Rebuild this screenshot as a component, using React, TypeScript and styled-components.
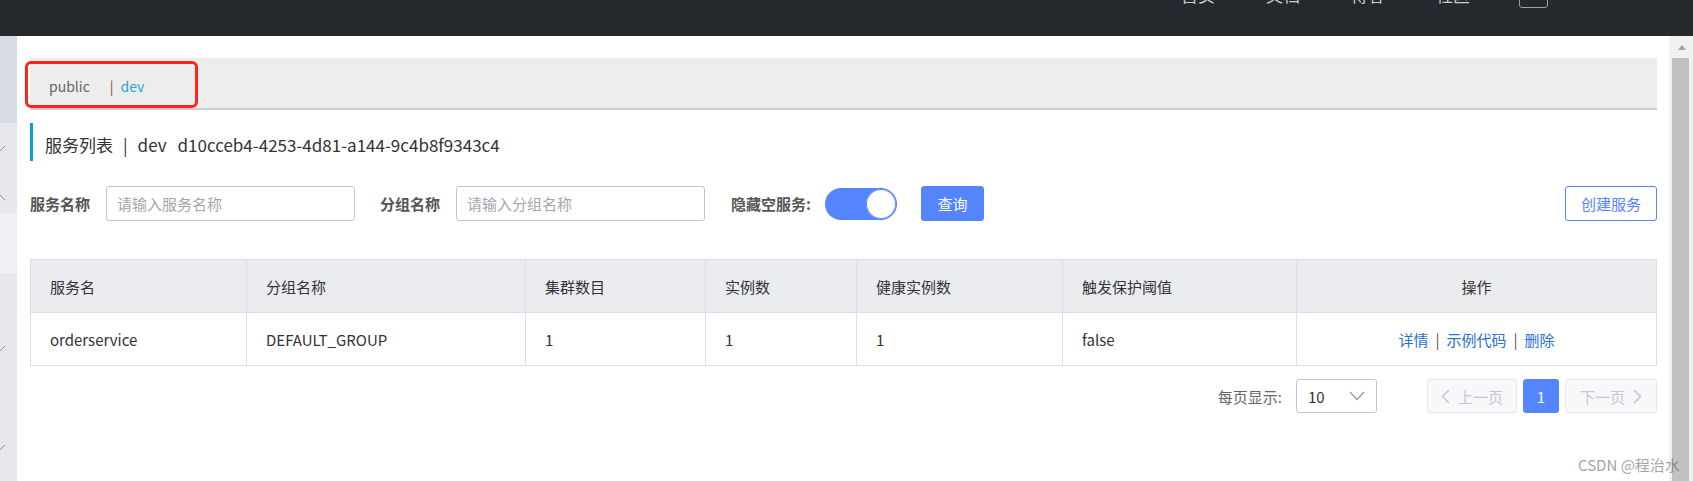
import React from 'react';
import styled, { createGlobalStyle } from 'styled-components';

const GlobalStyle = createGlobalStyle`
  html, body {
    margin: 0;
    padding: 0;
    background: #fff;
    overflow: hidden;
  }
  body {
    font-family: "Noto Sans CJK SC", "Noto Sans", sans-serif;
    color: #333;
  }
  * {
    box-sizing: border-box;
  }
`;

const Page = styled.div`
  position: relative;
  width: 1693px;
  height: 481px;
  display: flex;
  flex-direction: column;
  overflow: hidden;
`;

const TopBar = styled.header`
  flex: none;
  height: 36px;
  background: #25292e;
  display: flex;
  justify-content: flex-end;
  align-items: flex-start;
  padding-right: 145px;
  overflow: hidden;
`;

const NavList = styled.nav`
  display: flex;
  align-items: flex-start;
  margin-top: -15px;
`;

const NavItem = styled.span`
  color: #c9cbcd;
  font-size: 17px;
  line-height: 20px;
  margin-right: 51px;
`;

const LangBox = styled.span`
  width: 29px;
  height: 23px;
  margin-left: -2px;
  border: 1px solid #9b9ea2;
  border-radius: 3px;
`;

const Body = styled.div`
  flex: 1;
  min-height: 0;
  display: flex;
`;

const Sidebar = styled.aside`
  flex: none;
  width: 17px;
  display: flex;
  flex-direction: column;
  overflow: hidden;
`;

const SideItem = styled.div<{ $h?: number; $bg: string; $pad?: number }>`
  flex: ${({ $h }) => ($h ? 'none' : '1')};
  height: ${({ $h }) => ($h ? `${$h}px` : 'auto')};
  background: ${({ $bg }) => $bg};
  padding-top: ${({ $pad }) => $pad || 0}px;
`;

const Main = styled.main`
  flex: 1;
  min-width: 0;
  background: #fff;
  padding: 22px 12px 0 13px;
`;

const Scrollbar = styled.div`
  flex: none;
  width: 24px;
  background: #f1f1f1;
  display: flex;
  flex-direction: column;
`;

const ScrollArrow = styled.div`
  height: 22px;
  display: flex;
  align-items: center;
  justify-content: center;
  padding-left: 1px;
`;

const ScrollThumb = styled.div`
  flex: 1;
  margin: 0 4px 0 3px;
  background: #c1c1c1;
`;

const TabBar = styled.div`
  position: relative;
  height: 52px;
  background: #ededed;
  border-bottom: 2px solid #cdcdcd;
  display: flex;
  align-items: center;
  padding: 5px 0 0 19px;
  font-size: 14px;
`;

const TabItem = styled.span<{ $active?: boolean }>`
  color: ${({ $active }) => ($active ? '#27a6d9' : '#666')};
`;

const TabSep = styled.span`
  color: #8a4a4a;
  margin: 0 7px 0 20px;
`;

const Highlight = styled.div`
  position: absolute;
  left: -5px;
  top: 3px;
  width: 173px;
  height: 47px;
  border: 3px solid #ff2318;
  border-radius: 6px;
  pointer-events: none;
`;

const TitleBar = styled.h2`
  margin: 13px 0 0;
  height: 38px;
  border-left: 3px solid #0b9ed8;
  padding: 5px 0 0 12px;
  display: flex;
  align-items: center;
  font-size: 17px;
  font-weight: normal;
  color: #333;
`;

const TitleSep = styled.span`
  margin: 0 10px;
`;

const NamespaceId = styled.span`
  margin-left: 11px;
`;

const FilterRow = styled.div`
  margin-top: 25px;
  height: 35px;
  display: flex;
  align-items: center;
`;

const FilterLabel = styled.label<{ $gap?: number }>`
  font-size: 15px;
  font-weight: bold;
  color: #555;
  margin-left: ${({ $gap }) => $gap || 0}px;
  margin-right: 16px;
  white-space: nowrap;
`;

const TextInput = styled.input`
  width: 249px;
  height: 35px;
  border: 1px solid #c4c6cf;
  border-radius: 3px;
  padding: 0 10px;
  font-family: inherit;
  font-size: 15px;
  color: #333;
  outline: none;

  &::placeholder {
    color: #a3a6ad;
  }
`;

const Switch = styled.span<{ $on: boolean }>`
  display: flex;
  justify-content: ${({ $on }) => ($on ? 'flex-end' : 'flex-start')};
  align-items: center;
  width: 72px;
  height: 32px;
  margin-left: -2px;
  border-radius: 16px;
  background: ${({ $on }) => ($on ? '#5584ff' : '#e4e6ea')};
  padding: 1px;
`;

const Knob = styled.span`
  width: 30px;
  height: 30px;
  border-radius: 50%;
  background: #fff;
  box-shadow: 0 0 0 1px #5584ff inset;
`;

const Button = styled.button<{ $variant: 'primary' | 'outline' }>`
  height: 35px;
  padding: 0 14px;
  border-radius: 3px;
  font-family: inherit;
  font-size: 15px;
  cursor: pointer;
  border: 1px solid #5584ff;
  background: ${({ $variant }) => ($variant === 'primary' ? '#5584ff' : '#fff')};
  color: ${({ $variant }) => ($variant === 'primary' ? '#fff' : '#5584ff')};
`;

const SearchButton = styled(Button)`
  width: 63px;
  margin-left: 24px;
`;

const CreateButton = styled(Button)`
  width: 92px;
  margin-left: auto;
`;

const Table = styled.table`
  margin-top: 38px;
  width: 100%;
  border-collapse: collapse;
  table-layout: fixed;
  font-size: 15px;
  color: #333;
`;

const Th = styled.th<{ $center?: boolean }>`
  height: 53px;
  padding: 0 19px;
  background: #ebecf0;
  border: 1px solid #dcdee3;
  font-weight: normal;
  text-align: ${({ $center }) => ($center ? 'center' : 'left')};
`;

const Td = styled.td<{ $center?: boolean }>`
  height: 53px;
  padding: 0 19px;
  border: 1px solid #dcdee3;
  text-align: ${({ $center }) => ($center ? 'center' : 'left')};
`;

const ActionLink = styled.a`
  color: #2b6fd6;
  text-decoration: none;
  cursor: pointer;
`;

const ActionSep = styled.span`
  color: #555;
  margin: 0 7px;
`;

const Pager = styled.div`
  margin-top: 13px;
  height: 34px;
  display: flex;
  justify-content: flex-end;
  align-items: center;
  font-size: 15px;
`;

const PageSizeLabel = styled.span`
  color: #666;
  margin-right: 14px;
`;

const Select = styled.div`
  width: 81px;
  height: 34px;
  border: 1px solid #c4c6cf;
  border-radius: 3px;
  padding: 0 11px;
  display: flex;
  align-items: center;
  justify-content: space-between;
  color: #333;
  margin-right: 44px;
`;

const PageButton = styled.button<{ $w: number; $current?: boolean }>`
  width: ${({ $w }) => $w}px;
  height: 34px;
  margin-left: 6px;
  border-radius: 3px;
  font-family: inherit;
  font-size: 15px;
  display: flex;
  align-items: center;
  justify-content: center;
  gap: 8px;
  padding: 0;
  border: 1px solid ${({ $current }) => ($current ? '#5584ff' : '#e6e7eb')};
  background: ${({ $current }) => ($current ? '#5584ff' : '#f7f8fa')};
  color: ${({ $current }) => ($current ? '#fff' : '#c4c6cf')};
`;

const Watermark = styled.span`
  position: absolute;
  left: 1578px;
  top: 454px;
  font-size: 15px;
  color: rgba(100, 100, 100, 0.6);
  white-space: nowrap;
  pointer-events: none;
`;

const SideMark = ({ up }: { up?: boolean }) => (
  <svg width="6" height="6" viewBox="0 0 6 6" style={{ display: 'block' }}>
    <line
      x1="0"
      y1={up ? 0 : 6}
      x2="5"
      y2={up ? 5 : 1}
      stroke="#8c919a"
      strokeWidth="1"
    />
  </svg>
);

const Chevron = ({ dir }: { dir: 'left' | 'right' | 'down' }) => {
  if (dir === 'down') {
    return (
      <svg width="16" height="10" viewBox="0 0 16 10">
        <polyline points="1,1 8,8.5 15,1" fill="none" stroke="#999" strokeWidth="1.3" />
      </svg>
    );
  }
  return (
    <svg width="9" height="15" viewBox="0 0 9 15">
      <polyline
        points={dir === 'left' ? '8,1 1.5,7.5 8,14' : '1,1 7.5,7.5 1,14'}
        fill="none"
        stroke="#c4c6cf"
        strokeWidth="1.5"
      />
    </svg>
  );
};

const columns = [
  { title: '服务名', width: 216 },
  { title: '分组名称', width: 279 },
  { title: '集群数目', width: 180 },
  { title: '实例数', width: 151 },
  { title: '健康实例数', width: 206 },
  { title: '触发保护阈值', width: 234 },
  { title: '操作', center: true },
];

const rows = [
  {
    name: 'orderservice',
    group: 'DEFAULT_GROUP',
    clusters: 1,
    instances: 1,
    healthy: 1,
    threshold: 'false',
  },
];

export default function App() {
  return (
    <>
      <GlobalStyle />
      <Page>
        <TopBar>
          <NavList>
            <NavItem>首页</NavItem>
            <NavItem>文档</NavItem>
            <NavItem>博客</NavItem>
            <NavItem>社区</NavItem>
            <LangBox />
          </NavList>
        </TopBar>
        <Body>
          <Sidebar>
            <SideItem $h={87} $bg="#d8dce3" />
            <SideItem $h={50} $bg="#e6e8ee" $pad={22}>
              <SideMark />
            </SideItem>
            <SideItem $h={40} $bg="#e6e8ee" $pad={22}>
              <SideMark up />
            </SideItem>
            <SideItem $h={60} $bg="#eff0f4" />
            <SideItem $h={100} $bg="#e6e8ee" $pad={72}>
              <SideMark />
            </SideItem>
            <SideItem $h={99} $bg="#e6e8ee" $pad={71}>
              <SideMark />
            </SideItem>
            <SideItem $bg="#e6e8ee" />
          </Sidebar>

          <Main>
            <TabBar>
              <TabItem>public</TabItem>
              <TabSep>|</TabSep>
              <TabItem $active>dev</TabItem>
              <Highlight />
            </TabBar>

            <TitleBar>
              <span>服务列表</span>
              <TitleSep>|</TitleSep>
              <span>dev</span>
              <NamespaceId>d10cceb4-4253-4d81-a144-9c4b8f9343c4</NamespaceId>
            </TitleBar>

            <FilterRow>
              <FilterLabel>服务名称</FilterLabel>
              <TextInput placeholder="请输入服务名称" />
              <FilterLabel $gap={25}>分组名称</FilterLabel>
              <TextInput placeholder="请输入分组名称" />
              <FilterLabel $gap={26}>隐藏空服务:</FilterLabel>
              <Switch $on>
                <Knob />
              </Switch>
              <SearchButton $variant="primary">查询</SearchButton>
              <CreateButton $variant="outline">创建服务</CreateButton>
            </FilterRow>

            <Table>
              <colgroup>
                {columns.map((c) => (
                  <col key={c.title} style={c.width ? { width: c.width } : undefined} />
                ))}
              </colgroup>
              <thead>
                <tr>
                  {columns.map((c) => (
                    <Th key={c.title} $center={c.center}>
                      {c.title}
                    </Th>
                  ))}
                </tr>
              </thead>
              <tbody>
                {rows.map((r) => (
                  <tr key={r.name}>
                    <Td>{r.name}</Td>
                    <Td>{r.group}</Td>
                    <Td>{r.clusters}</Td>
                    <Td>{r.instances}</Td>
                    <Td>{r.healthy}</Td>
                    <Td>{r.threshold}</Td>
                    <Td $center>
                      <ActionLink>详情</ActionLink>
                      <ActionSep>|</ActionSep>
                      <ActionLink>示例代码</ActionLink>
                      <ActionSep>|</ActionSep>
                      <ActionLink>删除</ActionLink>
                    </Td>
                  </tr>
                ))}
              </tbody>
            </Table>

            <Pager>
              <PageSizeLabel>每页显示:</PageSizeLabel>
              <Select>
                <span>10</span>
                <Chevron dir="down" />
              </Select>
              <PageButton $w={90} disabled>
                <Chevron dir="left" />
                上一页
              </PageButton>
              <PageButton $w={36} $current>
                1
              </PageButton>
              <PageButton $w={92} disabled>
                下一页
                <Chevron dir="right" />
              </PageButton>
            </Pager>
          </Main>

          <Scrollbar>
            <ScrollArrow>
              <svg width="8" height="5" viewBox="0 0 8 5">
                <polygon points="0,5 4,0 8,5" fill="#a3a3a3" />
              </svg>
            </ScrollArrow>
            <ScrollThumb />
          </Scrollbar>
        </Body>
        <Watermark>CSDN @程治水</Watermark>
      </Page>
    </>
  );
}
